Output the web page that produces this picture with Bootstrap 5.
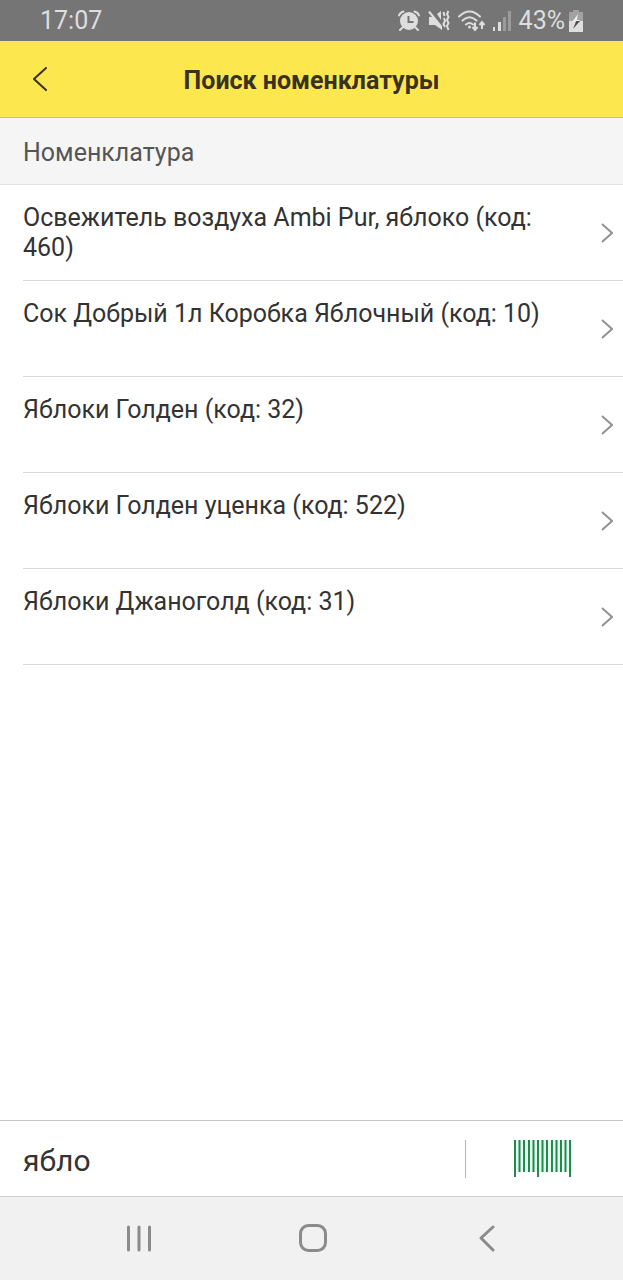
<!DOCTYPE html>
<html lang="ru">
<head>
<meta charset="utf-8">
<meta name="viewport" content="width=device-width, initial-scale=1">
<title>Поиск номенклатуры</title>
<link href="https://cdn.jsdelivr.net/npm/bootstrap@5.3.0/dist/css/bootstrap.min.css" rel="stylesheet">
<script src="https://cdn.jsdelivr.net/npm/bootstrap@5.3.0/dist/js/bootstrap.bundle.min.js" defer></script>
<style>
  body { font-family: Roboto, "Noto Sans", sans-serif; font-size: 25px; line-height: 30px; color: #333; background: #fff; }
  svg { display: block; flex: none; }
  .status-bar { height: 41px; padding: 1px 40px 0; background: #757575; color: #dedede; }
  .app-header { height: 77px; background: #fce84e; border-bottom: 1px solid #cdc27c; color: #3a3220; }
  .app-title { padding-top: 4px; font-size: 25px; line-height: 30px; font-weight: 700; }
  .side-slot { width: 80px; height: 76px; }
  .section-title { height: 67px; padding: 4px 23px 0; background: #f5f5f5; border-bottom: 1px solid #e2e2e2; color: #555; font-size: 25px; line-height: 30px; font-weight: 400; }
  .items { padding-left: 23px; }
  .item-row { min-height: 96px; padding: 0 10px 0 0; border: 0; border-bottom: 1px solid #d9d9d9; color: #333; background: #fff; }
  .item-text { padding: 18px 48px 17px 0; }
  .search-bar { height: 77px; border-top: 1px solid #c4c4c4; border-bottom: 1px solid #d0d0d0; }
  .search-input { min-width: 0; padding: 4px 23px 0; border: 0; outline: 0; background: transparent; color: #333; font-size: 30px; line-height: 36px; }
  .divider { width: 1px; height: 38px; background: #b4b4b4; }
  .scan-btn { width: 157px; padding: 0 4px 0 0; }
  .nav-keys { height: 83px; padding: 0 50px 2px 52px; background: #f1f1f1; }
</style>
</head>
<body>
<div class="d-flex flex-column min-vh-100">
  <div class="status-bar d-flex align-items-center justify-content-between">
    <span>17:07</span>
    <div class="d-flex align-items-center gap-2">
      <svg width="22" height="22" viewBox="0 0 22 22" role="img" aria-label="Будильник">
        <g fill="none" stroke="#dedede" stroke-width="2" stroke-linecap="round"><path d="M1 5.500Q2 2.500 5.500 1.500M21 5.500Q20 2.500 16.500 1.500M5 17l-3 3M17 17l3 3"/></g>
        <circle cx="11" cy="11" r="9" fill="#dedede"/>
        <path d="M10.500 6v6h5" fill="none" stroke="#757575" stroke-width="2"/>
      </svg>
      <svg width="22" height="22" viewBox="0 0 22 22" role="img" aria-label="Вибрация">
        <path d="M0 2l2-1 12 15v4l-7-5H1V7h3zM9 4l4-3v9z" fill="#dedede"/>
        <path d="M15.500 2l1 4M20.500 1l-1.500 3 1.500 3-1.500 3 1.500 3-1.500 3 1.500 4M16 8l1 3-1.500 3 1.500 3" fill="none" stroke="#dedede" stroke-width="2"/>
      </svg>
      <svg width="27" height="22" viewBox="0 0 27 22" role="img" aria-label="Wi-Fi">
        <g fill="none" stroke="#dedede" stroke-width="2" stroke-linecap="round"><path d="M1 6.500Q11.500-3.500 22 6.500M4.500 10.500q7-6.500 14 0M8 14.500q3.500-3 7 0"/></g>
        <circle cx="11.500" cy="17" r="1.500" fill="#dedede"/>
        <path d="M17 12.500v7M14.500 17l2.500 3 2.500-3M24 19v-6M21.500 15l2.500-3 2.500 3" fill="none" stroke="#dedede" stroke-width="2"/>
      </svg>
      <svg width="18" height="20" viewBox="0 0 18 20" role="img" aria-label="Сигнал сети">
        <path d="M0 16h2v4H0zM5 11h3v9H5z" fill="#dedede"/><path d="M10 6h3v14h-3zM15 0h3v20h-3z" fill="#9b9b9b"/>
      </svg>
      <div class="d-flex align-items-center gap-1">
        <span>43%</span>
        <svg width="14" height="22" viewBox="0 0 14 22" role="img" aria-label="Зарядка">
          <path d="M4 0h6v2h4v9H0V2h4z" fill="#a2a2a2"/><path d="M0 11h14v11H0z" fill="#dedede"/>
          <path d="M9 4l-6 8h4l-2 2h2l4-4H8z" fill="#eee"/><path d="M7 11h4l-7 8 2-5z" fill="#4d4d4d"/>
        </svg>
      </div>
    </div>
  </div>

  <header class="app-header d-flex align-items-center">
    <button type="button" class="btn side-slot border-0 rounded-0 p-0 d-flex align-items-center justify-content-center" aria-label="Назад">
      <svg width="14" height="24" viewBox="0 0 14 24" fill="none" stroke="#3a3220" stroke-width="2" stroke-linecap="round"><path d="M13 1L1 12l12 11"/></svg>
    </button>
    <h1 class="app-title flex-grow-1 text-center mb-0">Поиск номенклатуры</h1>
    <div class="side-slot"></div>
  </header>

  <main class="flex-grow-1">
    <h2 class="section-title d-flex align-items-center m-0">Номенклатура</h2>
    <div class="items">
      <a href="#" class="item-row d-flex justify-content-between text-decoration-none">
        <span class="item-text">Освежитель воздуха Ambi Pur, яблоко (код: 460)</span>
        <svg class="align-self-center" width="12" height="20" viewBox="0 0 12 20" fill="none" stroke="#929292" stroke-width="2"><path d="M1 1l10 9-10 9"/></svg>
      </a>
      <a href="#" class="item-row d-flex justify-content-between text-decoration-none">
        <span class="item-text">Сок Добрый 1л Коробка Яблочный (код: 10)</span>
        <svg class="align-self-center" width="12" height="20" viewBox="0 0 12 20" fill="none" stroke="#929292" stroke-width="2"><path d="M1 1l10 9-10 9"/></svg>
      </a>
      <a href="#" class="item-row d-flex justify-content-between text-decoration-none">
        <span class="item-text">Яблоки Голден (код: 32)</span>
        <svg class="align-self-center" width="12" height="20" viewBox="0 0 12 20" fill="none" stroke="#929292" stroke-width="2"><path d="M1 1l10 9-10 9"/></svg>
      </a>
      <a href="#" class="item-row d-flex justify-content-between text-decoration-none">
        <span class="item-text">Яблоки Голден уценка (код: 522)</span>
        <svg class="align-self-center" width="12" height="20" viewBox="0 0 12 20" fill="none" stroke="#929292" stroke-width="2"><path d="M1 1l10 9-10 9"/></svg>
      </a>
      <a href="#" class="item-row d-flex justify-content-between text-decoration-none">
        <span class="item-text">Яблоки Джаноголд (код: 31)</span>
        <svg class="align-self-center" width="12" height="20" viewBox="0 0 12 20" fill="none" stroke="#929292" stroke-width="2"><path d="M1 1l10 9-10 9"/></svg>
      </a>
    </div>
  </main>

  <form class="search-bar d-flex align-items-center">
    <input type="text" class="search-input flex-grow-1" value="ябло" aria-label="Поиск">
    <div class="divider"></div>
    <button type="button" class="scan-btn btn border-0 rounded-0 h-100 d-flex align-items-center justify-content-center" aria-label="Сканировать штрихкод">
      <svg width="60" height="38" viewBox="0 0 60 38">
        <path d="M1 0h58v32H1z" fill="#e3fbef"/>
        <path d="M2 0v37M25 0v37M57 0v37M6.500 0v32M11 0v32M16 0v32M20.500 0v32M29.500 0v32M34 0v32M39 0v32M43.500 0v32M48 0v32M52.500 0v32" stroke="#25894f" stroke-width="2"/>
      </svg>
    </button>
  </form>

  <nav class="nav-keys d-flex align-items-center justify-content-between" aria-label="Системная навигация">
    <button type="button" class="btn border-0 p-0" aria-label="Недавние">
      <svg width="174" height="28" viewBox="0 0 174 28" stroke="#8b8b8b" stroke-width="3" stroke-linecap="round"><path d="M76.500 3v23M87 3v23M97.500 3v23"/></svg>
    </button>
    <button type="button" class="btn border-0 p-0" aria-label="Домой">
      <svg width="28" height="28" viewBox="0 0 28 28" fill="none" stroke="#8b8b8b" stroke-width="3"><rect x="1.500" y="1.500" width="25" height="25" rx="8"/></svg>
    </button>
    <button type="button" class="btn border-0 p-0" aria-label="Назад">
      <svg width="174" height="28" viewBox="0 0 174 28" fill="none" stroke="#8b8b8b" stroke-width="3" stroke-linecap="round" stroke-linejoin="round"><path d="M94 3L82 14l12 12"/></svg>
    </button>
  </nav>
</div>
</body>
</html>
